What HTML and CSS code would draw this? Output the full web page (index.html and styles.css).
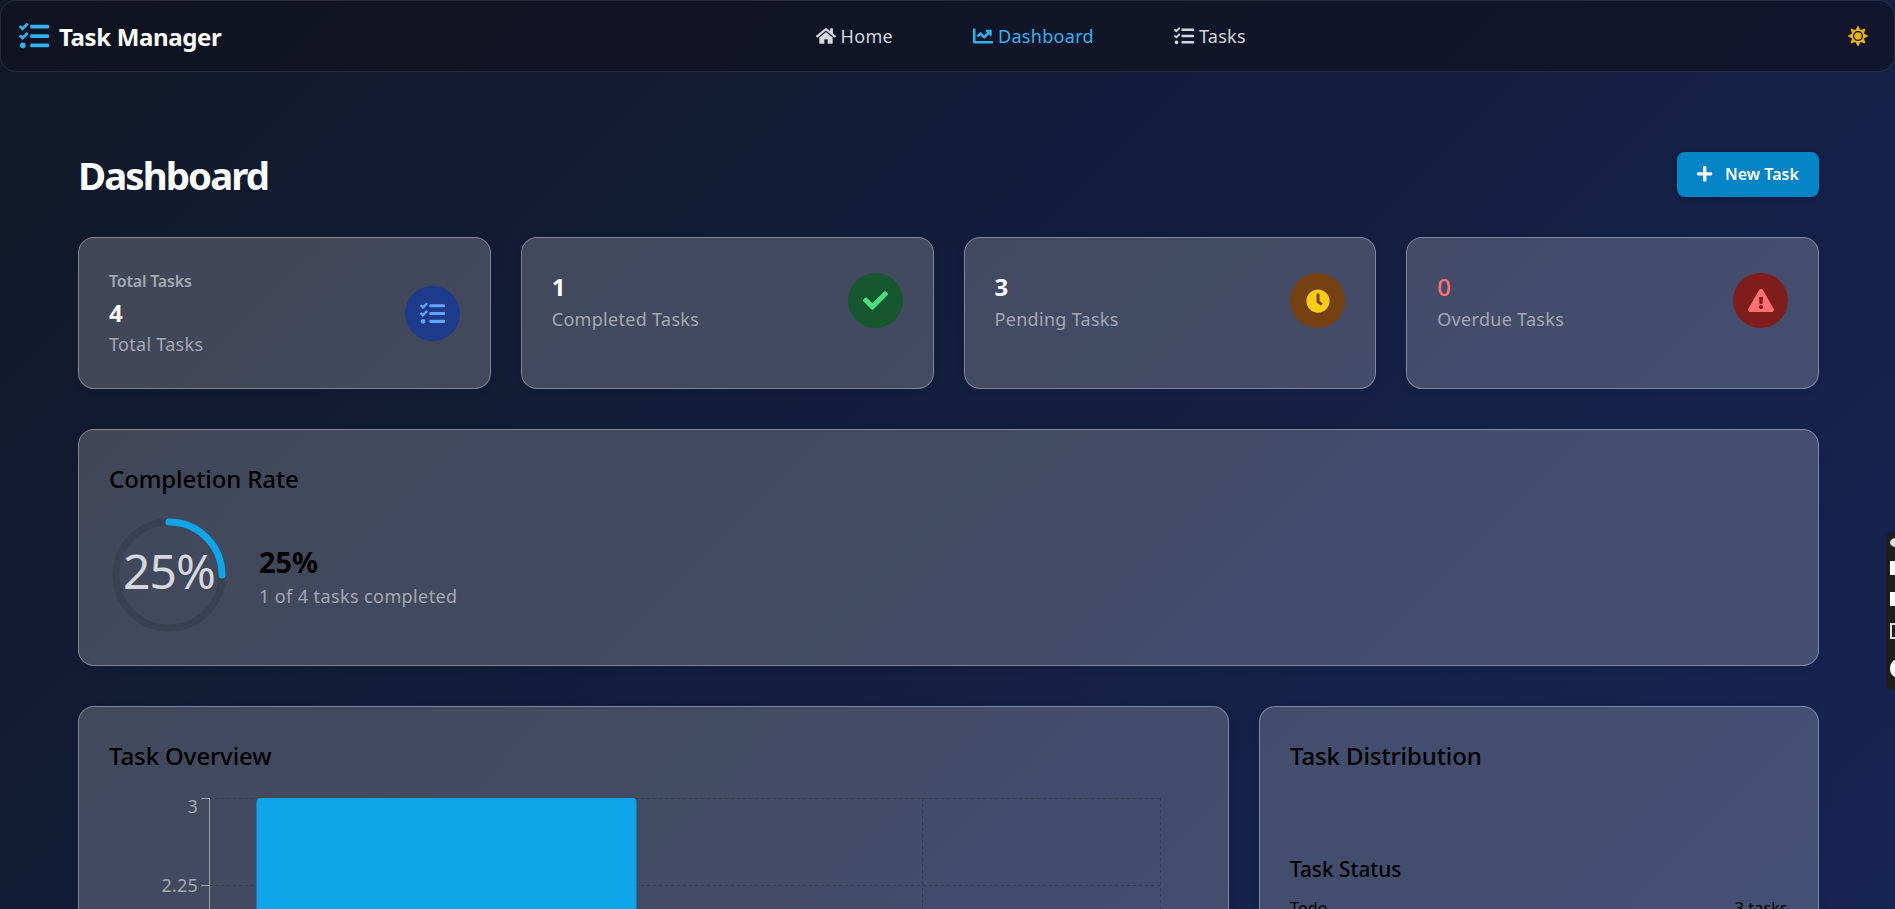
FILE: index.html
```html
<!DOCTYPE html>
<html lang="en">
<head>
    <meta charset="UTF-8">
    <meta name="viewport" content="width=device-width, initial-scale=1">
    <title>Task Manager</title>
    <link rel="stylesheet" href="styles.css">
</head>
<body>
    <svg class="sprite" xmlns="http://www.w3.org/2000/svg">
        <symbol id="i-tasks" viewBox="0 0 512 512"><path d="M139.61 35.5a12 12 0 0 0-17 0L58.93 98.81l-22.7-22.12a12 12 0 0 0-17 0L3.53 92.41a12 12 0 0 0 0 17l47.59 47.4a12.78 12.78 0 0 0 17.61 0l15.59-15.62L156.52 69a12.09 12.09 0 0 0 .09-17zm0 159.19a12 12 0 0 0-17 0l-63.68 63.72-22.7-22.1a12 12 0 0 0-17 0L3.53 252a12 12 0 0 0 0 17L51 316.5a12.77 12.77 0 0 0 17.6 0l15.7-15.69 72.2-72.22a12 12 0 0 0 .09-16.9zM64 368c-26.49 0-48.59 21.5-48.59 48S37.53 464 64 464a48 48 0 0 0 0-96zm432 16H208a16 16 0 0 0-16 16v32a16 16 0 0 0 16 16h288a16 16 0 0 0 16-16v-32a16 16 0 0 0-16-16zm0-320H208a16 16 0 0 0-16 16v32a16 16 0 0 0 16 16h288a16 16 0 0 0 16-16V80a16 16 0 0 0-16-16zm0 160H208a16 16 0 0 0-16 16v32a16 16 0 0 0 16 16h288a16 16 0 0 0 16-16v-32a16 16 0 0 0-16-16z"/></symbol>
        <symbol id="i-home" viewBox="0 0 576 512"><path d="M280.37 148.26L96 300.11V464a16 16 0 0 0 16 16l112.06-.29a16 16 0 0 0 15.92-16V368a16 16 0 0 1 16-16h64a16 16 0 0 1 16 16v95.64a16 16 0 0 0 16 16.05L464 480a16 16 0 0 0 16-16V300L295.67 148.26a12.19 12.19 0 0 0-15.3 0zM571.6 251.47L488 182.56V44.05a12 12 0 0 0-12-12h-56a12 12 0 0 0-12 12v72.61L318.47 43a48 48 0 0 0-61 0L4.34 251.47a12 12 0 0 0-1.6 16.9l25.5 31A12 12 0 0 0 45.15 301l235.22-193.74a12.19 12.19 0 0 1 15.3 0L530.9 301a12 12 0 0 0 16.9-1.6l25.5-31a12 12 0 0 0-1.7-16.93z"/></symbol>
        <symbol id="i-chart" viewBox="0 0 512 512"><path d="M496 384H64V80c0-8.84-7.16-16-16-16H16C7.16 64 0 71.16 0 80v336c0 17.67 14.33 32 32 32h464c8.84 0 16-7.16 16-16v-32c0-8.84-7.16-16-16-16zM464 96H345.94c-21.38 0-32.09 25.85-16.97 40.97l32.4 32.4L288 242.75l-73.37-73.37c-12.5-12.5-32.76-12.5-45.25 0l-68.69 68.69c-6.25 6.25-6.25 16.38 0 22.63l22.62 22.62c6.25 6.25 16.38 6.25 22.63 0L192 237.25l73.37 73.37c12.5 12.5 32.76 12.5 45.25 0l96-96 32.4 32.4c15.12 15.12 40.97 4.41 40.97-16.97V112c.01-8.84-7.15-16-15.99-16z"/></symbol>
        <symbol id="i-sun" viewBox="0 0 512 512"><path d="M256 160c-52.9 0-96 43.1-96 96s43.1 96 96 96 96-43.1 96-96-43.1-96-96-96zm246.4 80.5l-94.7-47.3 33.5-100.4c4.5-13.6-8.4-26.5-21.9-21.9l-100.4 33.5-47.4-94.8c-6.4-12.8-24.6-12.8-31 0l-47.3 94.7L92.7 70.8c-13.6-4.5-26.5 8.4-21.9 21.9l33.5 100.4-94.7 47.4c-12.8 6.4-12.8 24.6 0 31l94.7 47.3-33.5 100.5c-4.5 13.6 8.4 26.5 21.9 21.9l100.4-33.5 47.3 94.7c6.4 12.8 24.6 12.8 31 0l47.3-94.7 100.4 33.5c13.6 4.5 26.5-8.4 21.9-21.9l-33.5-100.4 94.7-47.3c13-6.5 13-24.7.2-31.1zm-155.9 106c-49.9 49.9-131.1 49.9-181 0-49.9-49.9-49.9-131.1 0-181 49.9-49.9 131.1-49.9 181 0 49.9 49.9 49.9 131.1 0 181z"/></symbol>
        <symbol id="i-plus" viewBox="0 0 448 512"><path d="M416 208H272V64c0-17.67-14.33-32-32-32h-32c-17.67 0-32 14.33-32 32v144H32c-17.67 0-32 14.33-32 32v32c0 17.67 14.33 32 32 32h144v144c0 17.67 14.33 32 32 32h32c17.67 0 32-14.33 32-32V304h144c17.67 0 32-14.33 32-32v-32c0-17.67-14.33-32-32-32z"/></symbol>
        <symbol id="i-check" viewBox="0 0 512 512"><path d="M173.898 439.404l-166.4-166.4c-9.997-9.997-9.997-26.206 0-36.204l36.203-36.204c9.997-9.998 26.207-9.998 36.204 0L192 312.69 432.095 72.596c9.997-9.997 26.207-9.997 36.204 0l36.203 36.204c9.997 9.997 9.997 26.206 0 36.204l-294.4 294.401c-9.998 9.997-26.207 9.997-36.204-.001z"/></symbol>
        <symbol id="i-clock" viewBox="0 0 512 512"><path d="M256,8C119,8,8,119,8,256S119,504,256,504,504,393,504,256,393,8,256,8Zm92.49,313h0l-20,25a16,16,0,0,1-22.49,2.5h0l-67-49.72a40,40,0,0,1-15-31.23V112a16,16,0,0,1,16-16h32a16,16,0,0,1,16,16V256l58,42.5A16,16,0,0,1,348.49,321Z"/></symbol>
        <symbol id="i-warn" viewBox="0 0 576 512"><path d="M569.517 440.013C587.975 472.007 564.806 512 527.94 512H48.054c-36.937 0-59.999-40.055-41.577-71.987L246.423 23.985c18.467-32.009 64.72-31.951 83.154 0l239.94 416.028zM288 354c-25.405 0-46 20.595-46 46s20.595 46 46 46 46-20.595 46-46-20.595-46-46-46zm-43.673-165.346l7.418 136c.347 6.364 5.609 11.346 11.982 11.346h48.546c6.373 0 11.635-4.982 11.982-11.346l7.418-136c.375-6.874-5.098-12.654-11.982-12.654h-63.383c-6.884 0-12.356 5.78-11.981 12.654z"/></symbol>
    </svg>

    <nav class="navbar">
        <a class="brand" href="#">
            <svg class="brand-icon"><use href="#i-tasks"/></svg>
            <span>Task Manager</span>
        </a>
        <div class="nav-links">
            <a class="nav-link" href="#"><svg class="nav-icon"><use href="#i-home"/></svg>Home</a>
            <a class="nav-link active" href="#"><svg class="nav-icon"><use href="#i-chart"/></svg>Dashboard</a>
            <a class="nav-link" href="#"><svg class="nav-icon"><use href="#i-tasks"/></svg>Tasks</a>
        </div>
        <button class="theme-toggle" type="button" aria-label="Toggle theme">
            <svg class="sun-icon"><use href="#i-sun"/></svg>
        </button>
    </nav>

    <main class="dashboard">
        <div class="page-header">
            <h1>Dashboard</h1>
            <button class="new-task" type="button"><svg class="plus-icon"><use href="#i-plus"/></svg>New Task</button>
        </div>

        <section class="stats">
            <div class="card stat-card">
                <div class="stat-inner">
                    <div>
                        <div class="stat-title">Total Tasks</div>
                        <div class="stat-value">4</div>
                        <div class="stat-label">Total Tasks</div>
                    </div>
                    <div class="stat-icon icon-blue"><svg class="icon-tasks"><use href="#i-tasks"/></svg></div>
                </div>
            </div>
            <div class="card stat-card">
                <div class="stat-inner">
                    <div>
                        <div class="stat-value">1</div>
                        <div class="stat-label">Completed Tasks</div>
                    </div>
                    <div class="stat-icon icon-green"><svg class="icon-check"><use href="#i-check"/></svg></div>
                </div>
            </div>
            <div class="card stat-card">
                <div class="stat-inner">
                    <div>
                        <div class="stat-value">3</div>
                        <div class="stat-label">Pending Tasks</div>
                    </div>
                    <div class="stat-icon icon-amber"><svg class="icon-clock"><use href="#i-clock"/></svg></div>
                </div>
            </div>
            <div class="card stat-card">
                <div class="stat-inner">
                    <div>
                        <div class="stat-value value-red">0</div>
                        <div class="stat-label">Overdue Tasks</div>
                    </div>
                    <div class="stat-icon icon-red"><svg class="icon-warn"><use href="#i-warn"/></svg></div>
                </div>
            </div>
        </section>

        <section class="card completion">
            <h3 class="card-title">Completion Rate</h3>
            <div class="completion-body">
                <div class="ring">
                    <svg width="120" height="120" viewBox="0 0 120 120">
                        <circle class="ring-track" cx="60" cy="60" r="53"/>
                        <path class="ring-value" d="M60 7A53 53 0 0 1 113 60"/>
                    </svg>
                    <span class="ring-text">25%</span>
                </div>
                <div class="completion-text">
                    <div class="completion-value">25%</div>
                    <div class="completion-note">1 of 4 tasks completed</div>
                </div>
            </div>
        </section>

        <section class="charts">
            <div class="card">
                <h3 class="card-title">Task Overview</h3>
                <svg class="bar-chart" width="1090" height="130" viewBox="0 0 1090 130">
                    <g class="grid-lines">
                        <line x1="100" y1="8.5" x2="1051" y2="8.5"/>
                        <line x1="100" y1="95.5" x2="1051" y2="95.5"/>
                        <line x1="813.5" y1="8" x2="813.5" y2="130"/>
                        <line x1="1051.5" y1="8" x2="1051.5" y2="130"/>
                    </g>
                    <path class="bar" d="M147.5 130V12a4 4 0 0 1 4-4h372a4 4 0 0 1 4 4V130z"/>
                    <g class="axis-lines">
                        <line x1="100.5" y1="8" x2="100.5" y2="130"/>
                        <line x1="92" y1="8.5" x2="100" y2="8.5"/>
                        <line x1="92" y1="95.5" x2="100" y2="95.5"/>
                    </g>
                    <text class="axis-label" x="89" y="23">3</text>
                    <text class="axis-label" x="89" y="102">2.25</text>
                </svg>
            </div>
            <div class="card">
                <h3 class="card-title">Task Distribution</h3>
                <h4 class="status-title">Task Status</h4>
                <div class="status-row"><span>Todo</span><span>3 tasks</span></div>
            </div>
        </section>
    </main>

    <div class="side-widget">
        <span class="widget-dot"></span>
        <span class="widget-box"></span>
        <span class="widget-box"></span>
        <span class="widget-box widget-outline"></span>
        <span class="widget-dot widget-big"></span>
    </div>
</body>
</html>
```
FILE: styles.css
```css
* {
    box-sizing: border-box;
}

html {
    height: 100%;
    overflow: hidden;
}

body {
    margin: 0;
    height: 100%;
    overflow: hidden;
    font-family: "Noto Sans", "Open Sans", sans-serif;
    background: linear-gradient(135deg, #111827 0%, #162454 100%);
    color: #000;
}

.sprite {
    display: none;
}

svg {
    fill: currentColor;
}

.navbar {
    display: flex;
    align-items: center;
    justify-content: space-between;
    height: 72px;
    padding: 0 18px;
    background: rgba(15, 16, 28, 0.6);
    border: 1px solid rgba(255, 255, 255, 0.1);
    border-radius: 16px;
}

.brand {
    display: flex;
    align-items: center;
    gap: 10px;
    color: #fff;
    font-size: 24px;
    font-weight: 700;
    letter-spacing: -0.35px;
    text-decoration: none;
}

.brand-icon {
    width: 30px;
    height: 30px;
    color: #2fb2f0;
}

.nav-links {
    display: flex;
    gap: 80px;
}

.nav-link {
    display: flex;
    align-items: center;
    gap: 5px;
    color: #d5d8de;
    font-size: 18px;
    letter-spacing: 0.3px;
    text-decoration: none;
}

.nav-link.active {
    color: #2fb2f0;
}

.nav-icon {
    width: 20px;
    height: 20px;
}

.theme-toggle {
    display: flex;
    padding: 8px;
    background: none;
    border: none;
    color: #eab308;
}

.sun-icon {
    width: 20px;
    height: 20px;
}

.dashboard {
    padding: 73px 76px 0 78px;
}

.page-header {
    display: flex;
    align-items: center;
    justify-content: space-between;
    height: 60px;
    margin-bottom: 32px;
}

h1 {
    margin: 0;
    color: #fff;
    font-size: 38.4px;
    font-weight: 700;
    letter-spacing: -1.9px;
}

.new-task {
    display: flex;
    align-items: center;
    gap: 12px;
    height: 45px;
    margin-top: -2px;
    padding: 0 20px;
    font-family: inherit;
    font-size: 16px;
    font-weight: 600;
    letter-spacing: 0.05px;
    color: #fff;
    background: #0284c7;
    border: none;
    border-radius: 8px;
    box-shadow: 0 2px 6px rgba(0, 0, 0, 0.15);
}

.plus-icon {
    width: 15.5px;
    height: 17.6px;
}

.card {
    padding: 30px;
    background: rgba(255, 255, 255, 0.2);
    border: 1px solid rgba(255, 255, 255, 0.33);
    border-radius: 16px;
    box-shadow: 0 2px 8px rgba(0, 0, 0, 0.05);
}

.stats {
    display: grid;
    grid-template-columns: repeat(4, 1fr);
    gap: 30px;
    margin-bottom: 40px;
}

.stat-inner {
    display: flex;
    align-items: center;
    justify-content: space-between;
}

.stat-title {
    font-size: 16px;
    line-height: 27px;
    font-weight: 600;
    color: #a3a8b3;
    letter-spacing: -0.2px;
}

.stat-value {
    font-size: 24px;
    line-height: 38px;
    font-weight: 700;
    color: #fff;
}

.stat-title + .stat-value {
    line-height: 36px;
}

.value-red {
    font-weight: 500;
    color: #ff7070;
}

.stat-label {
    font-size: 18px;
    line-height: 27px;
    color: #a3a8b3;
    letter-spacing: 0.3px;
}

.stat-icon {
    display: flex;
    align-items: center;
    justify-content: center;
    width: 55px;
    height: 55px;
    border-radius: 50%;
}

.icon-blue {
    background: #1e3a8a;
    color: #60a5fa;
}

.icon-green {
    background: #16572f;
    color: #4ade80;
}

.icon-amber {
    background: #754012;
    color: #facc15;
}

.icon-red {
    background: #7f1d1d;
    color: #ff7070;
}

.icon-tasks,
.icon-check {
    width: 25px;
    height: 25px;
}

.icon-clock {
    width: 24px;
    height: 24px;
}

.icon-warn {
    width: 26px;
    height: 23px;
}

.card-title {
    margin: 0 0 17px;
    font-size: 24px;
    line-height: 38px;
    font-weight: 500;
    letter-spacing: -0.1px;
}

.completion {
    margin-bottom: 40px;
}

.completion-body {
    display: flex;
    align-items: center;
    gap: 30px;
}

.ring {
    position: relative;
    width: 120px;
    height: 120px;
}

.ring svg {
    display: block;
}

.ring-track {
    fill: none;
    stroke: #374151;
    stroke-width: 7;
}

.ring-value {
    fill: none;
    stroke: #0ea5e9;
    stroke-width: 7;
    stroke-linecap: round;
}

.ring-text {
    position: absolute;
    inset: 0 0 9px;
    display: flex;
    align-items: center;
    justify-content: center;
    font-size: 48px;
    color: #d4d7dd;
    letter-spacing: -1px;
}

.completion-text {
    padding-top: 2px;
}

.completion-value {
    font-size: 28.8px;
    line-height: 38px;
    font-weight: 700;
}

.completion-note {
    margin-top: 1px;
    font-size: 18px;
    line-height: 28px;
    color: #a3a8b3;
    letter-spacing: 0.4px;
}

.charts {
    display: grid;
    grid-template-columns: minmax(0, 2.055fr) minmax(0, 1fr);
    gap: 30px;
}

.bar-chart {
    display: block;
    margin-top: -2px;
}

.grid-lines line {
    stroke: #343c50;
    stroke-dasharray: 3 3;
}

.axis-lines line {
    stroke: #9ca3af;
}

.bar {
    fill: #0ea5e9;
}

.axis-label {
    font-size: 18px;
    fill: #a3a8b3;
    text-anchor: end;
    letter-spacing: 0.2px;
}

.status-title {
    margin: 78px 0 9px;
    font-size: 20.8px;
    line-height: 33px;
    font-weight: 500;
}

.status-row {
    display: flex;
    justify-content: space-between;
    font-size: 16px;
    line-height: 26px;
    letter-spacing: 0.2px;
}

/* browser extension tab stuck to the right edge */
.side-widget {
    position: fixed;
    top: 532px;
    right: 0;
    display: flex;
    flex-direction: column;
    gap: 17px;
    width: 9px;
    height: 158px;
    padding: 6px 0 0 4px;
    overflow: hidden;
    background: #1e1e1e;
    border-radius: 6px 0 0 6px;
}

.widget-box {
    flex: none;
    width: 12px;
    height: 14px;
    background: #fff;
}

.widget-outline {
    height: 16px;
    background: none;
    border: 2px solid #ddd;
}

.widget-dot {
    flex: none;
    width: 12px;
    height: 9px;
    margin-bottom: -3px;
    background: #ddd;
    border-radius: 50%;
}

.widget-big {
    height: 17px;
    margin: 4px 0 0;
    background: #fff;
}
```
